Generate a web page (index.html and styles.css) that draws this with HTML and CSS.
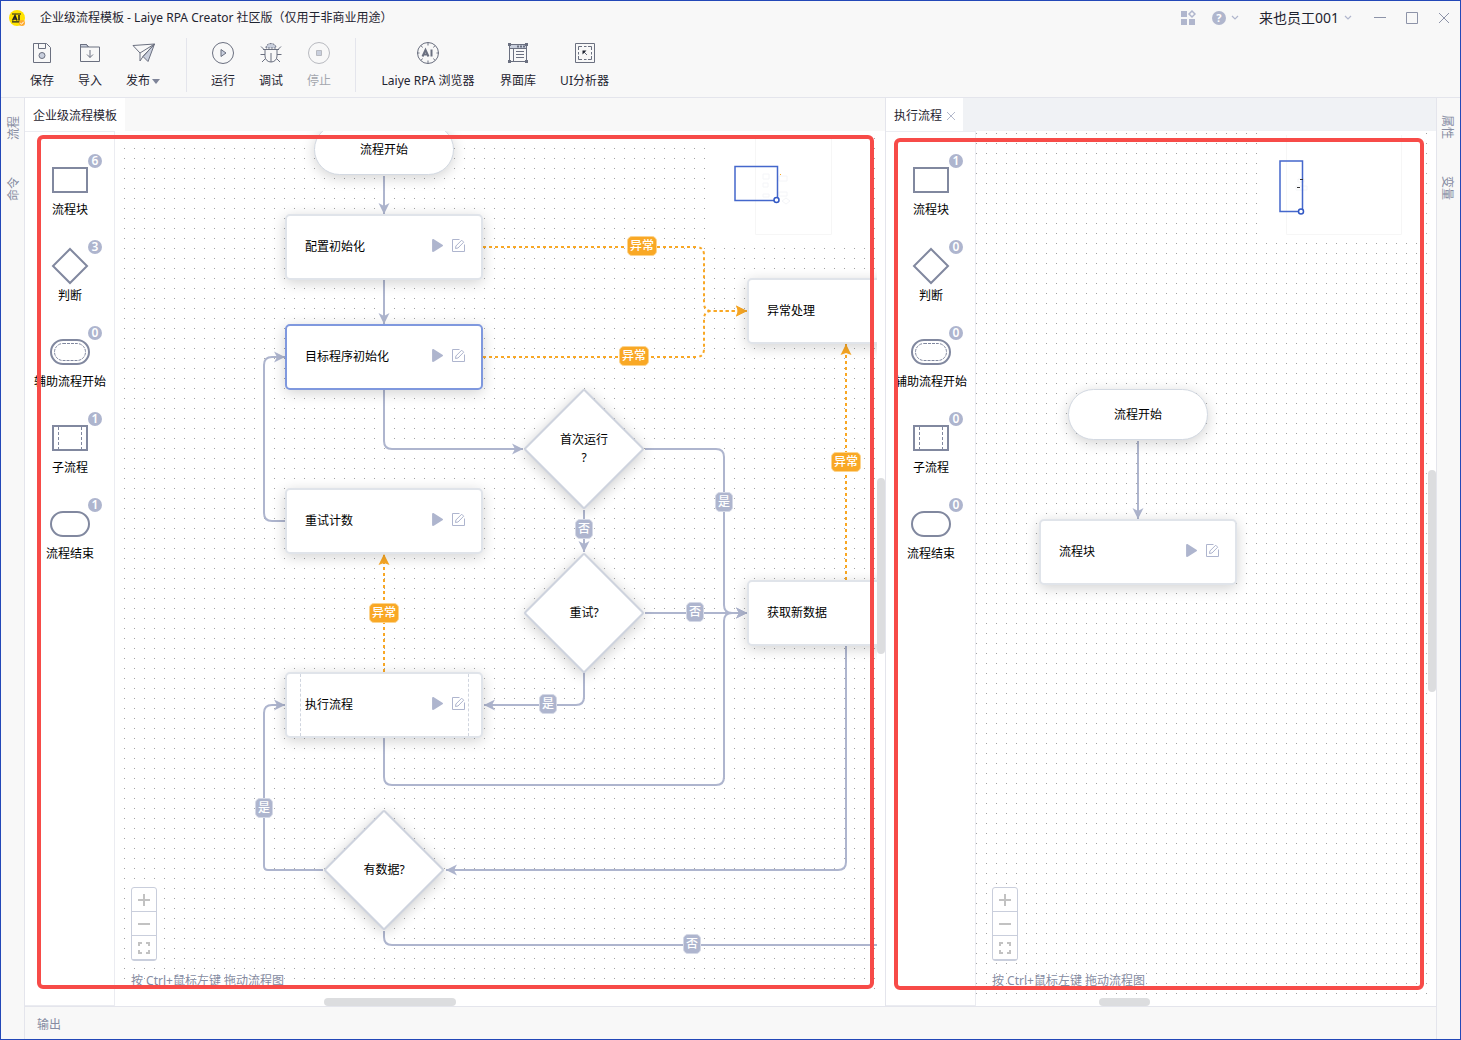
FILE: index.html
```html
<!DOCTYPE html>
<html lang="zh-CN">
<head>
<meta charset="utf-8">
<meta name="viewport" content="width=device-width, initial-scale=1">
<title>企业级流程模板 - Laiye RPA Creator</title>
<link rel="stylesheet" href="styles.css">
</head>
<body>
<svg class="defs" aria-hidden="true">
  <defs>
    <marker id="arrow" markerUnits="userSpaceOnUse" markerWidth="12" markerHeight="12" refX="11" refY="6" orient="auto"><path class="arrow-fill" d="M0 0.5 11 6 0 11.5 3 6z"/></marker>
    <marker id="arrow-error" markerUnits="userSpaceOnUse" markerWidth="12" markerHeight="12" refX="11" refY="6" orient="auto"><path class="arrow-fill-error" d="M0 0.5 11 6 0 11.5 2 6z"/></marker>
    <pattern id="dots-main" width="10" height="10" patternUnits="userSpaceOnUse"><rect class="dot" x="9" y="7" width="1" height="1"/></pattern>
    <pattern id="dots-sub" width="10" height="10" patternUnits="userSpaceOnUse"><rect class="dot" x="0" y="2" width="1" height="1"/></pattern>
    <symbol id="chevron" viewBox="0 0 8 6"><path d="M1 1l3 3 3-3" fill="none" stroke="currentColor" stroke-width="1.2"/></symbol>
    <symbol id="play" viewBox="0 0 12 12"><path d="M1 1.2C1 .3 1.8-.2 2.6.2L10.600 5.200c.7.400.7 1.200 0 1.600L2.600 11.800C1.800 12.200 1 11.700 1 10.800z" fill="currentColor"/></symbol>
    <symbol id="edit" viewBox="0 0 13 13"><path d="M7.500.500H.500v12h12V5.500" fill="none" stroke="currentColor"/><path d="M3.500 9.500l.4-2.500L9.700 1.200l2 2L6 9z" fill="none" stroke="currentColor"/></symbol>
    <symbol id="shape-block" viewBox="0 0 40 40"><path d="M3 8h34v24H3z"/></symbol>
    <symbol id="shape-decision" viewBox="0 0 40 40"><path d="M20 3l17 17-17 17L3 20z"/></symbol>
    <symbol id="shape-aux" viewBox="0 0 40 40"><rect x="1" y="8" width="38" height="24" rx="12"/><rect x="4.500" y="11.500" width="31" height="17" rx="8.500" stroke-width="1" stroke-dasharray="3 1"/></symbol>
    <symbol id="shape-sub" viewBox="0 0 40 40"><path d="M3 8h34v24H3z"/><path d="M8.500 9v22M31.500 9v22" stroke-width="1" stroke-dasharray="3 2"/></symbol>
    <symbol id="shape-end" viewBox="0 0 40 40"><rect x="1" y="8" width="38" height="24" rx="12"/></symbol>
  </defs>
</svg>

<header class="header">
  <div class="titlebar">
    <svg class="logo" viewBox="0 0 18 18"><circle cx="9" cy="9" r="8" fill="#ffe300"/><path d="M4 5h9M4 12.800h8" stroke="#222" stroke-width="1.200"/><path d="M4.500 11.500L7 6.500l2 5M5.500 10h3M11 6v5.500" fill="none" stroke="#222" stroke-width="1.500"/><circle cx="14" cy="14" r="3" fill="#ffab2e"/><path d="M12.300 14.200l1.300 1 2-2.400" fill="none" stroke="#fff"/></svg>
    <h1 class="title">企业级流程模板 - Laiye RPA Creator 社区版（仅用于非商业用途）</h1>
    <div class="account">
      <button class="icon-btn apps" aria-label="应用"><svg width="16" height="16" viewBox="0 0 16 16" fill="currentColor"><path d="M1 1h6v6H1zM1 9h6v6H1zM9 9h6v6H9z"/><path d="M12 1l3 3-3 3-3-3z" fill="none" stroke="currentColor" stroke-width="1.500"/></svg></button>
      <button class="icon-btn help" aria-label="帮助"><span class="help-mark">?</span><svg width="8" height="6"><use href="#chevron"/></svg></button>
      <button class="icon-btn user">来也员工001<svg width="8" height="6"><use href="#chevron"/></svg></button>
    </div>
    <div class="window-buttons">
      <button class="icon-btn" aria-label="最小化"><svg width="12" height="12"><path d="M0 5.500h12" stroke="currentColor"/></svg></button>
      <button class="icon-btn" aria-label="最大化"><svg width="12" height="12"><path d="M.5.500h11v11H.500z" fill="none" stroke="currentColor"/></svg></button>
      <button class="icon-btn" aria-label="关闭"><svg width="12" height="12"><path d="M1 1l10 10M11 1L1 11" stroke="currentColor"/></svg></button>
    </div>
  </div>
  <nav class="toolbar">
    <button class="tool"><svg viewBox="0 0 24 24"><path d="M3.500 2.500h13l4 4v15h-17zM8.500 2.500v5h7v-5"/><circle class="tint" cx="12" cy="14.500" r="3"/></svg><span>保存</span></button>
    <button class="tool"><svg viewBox="0 0 24 24"><path class="tint" d="M2.500 6V3.500h6l2 2.500z"/><path d="M2.500 3.500h6l2 2.500h11v14.500h-19zM12 9v7.500M9 13.500l3 3 3-3"/></svg><span>导入</span></button>
    <button class="tool"><svg viewBox="0 0 24 24"><path class="tint" d="M22.500 3L16 20.500l-5-5z"/><path d="M1 4.500L22.500 3 8 12zM8 12v8l3-4.500M11 15.500L22.500 3"/></svg><span class="with-caret">发布</span></button>
    <span class="separator"></span>
    <button class="tool"><svg viewBox="0 0 24 24"><circle cx="12" cy="12" r="10.500"/><path class="tint" d="M10 8.500v7l5-3.500z"/></svg><span>运行</span></button>
    <button class="tool"><svg viewBox="0 0 24 24"><path class="tint" d="M7 7c0-6 10-6 10 0z" stroke-dasharray="2 1"/><path d="M4 8.500h16M6 8.500V15c0 8 12 8 12 0V8.500M12 12v9M1.500 13.500H6M18 13.500h4.500M5 8.500l-3-3M19 8.500l3-3M6.500 17.500L3 21M17.500 17.500L21 21"/></svg><span>调试</span></button>
    <button class="tool" disabled><svg viewBox="0 0 24 24"><circle cx="12" cy="12" r="10.500"/><path class="tint" d="M9.500 9.500h5v5h-5z"/></svg><span>停止</span></button>
    <span class="separator"></span>
    <button class="tool tool-wide"><svg viewBox="0 0 24 24"><circle cx="12" cy="12" r="10.500"/><path d="M12 1.500v3M12 19.500v3M1.500 12h2M20.500 12h2M5 4.500l1.500 2M19 4.500l-1.500 2M5 19.500l1.500-2M19 19.500l-1.500-2"/><path d="M6.500 15.500L9.500 9l3 6.500M8 13.500h3.500M15.500 8.500v7" stroke-width="2"/></svg><span>Laiye RPA 浏览器</span></button>
    <button class="tool"><svg viewBox="0 0 24 24"><path class="tint" d="M3.500 3.500h17v4h-17z"/><path d="M3.500 3.500h17v17h-17zM7.500 7.500v13M10 10.500h8M10 13.500h8M10 16.500h8"/><path d="M2 3.500h3M19 3.500h3M2 20.500h3M19 20.500h3" stroke-width="3"/><path d="M11 5.500h8" stroke-width="2" stroke-dasharray="2 1"/></svg><span>界面库</span></button>
    <button class="tool"><svg viewBox="0 0 24 24"><path d="M2.500 2.500h19v19h-19z"/><path d="M5.500 9V5.500H9M15 5.500h3.500V9M18.500 15v3.500H15M9 18.500H5.500V15M11 5.500h2.500M11 18.500h2.500M5.500 11v2.500M18.500 11v2.500M10 10l4 4"/><path d="M9.500 9.500h4l-4 4z" fill="currentColor" stroke="none"/></svg><span>UI分析器</span></button>
  </nav>
</header>

<main class="workspace">
  <nav class="rail rail-left">
    <button class="rail-tab">流程</button>
    <button class="rail-tab">命令</button>
  </nav>

  <div class="center">
    <div class="panes">
      <section class="pane pane-main">
        <div class="tabs"><button class="tab">企业级流程模板</button></div>
        <div class="pane-body">
          <ul class="palette">
            <li class="shape"><div class="glyph"><svg><use href="#shape-block"/></svg><span class="badge">6</span></div>流程块</li>
            <li class="shape"><div class="glyph"><svg><use href="#shape-decision"/></svg><span class="badge">3</span></div>判断</li>
            <li class="shape"><div class="glyph"><svg><use href="#shape-aux"/></svg><span class="badge">0</span></div>辅助流程开始</li>
            <li class="shape"><div class="glyph"><svg><use href="#shape-sub"/></svg><span class="badge">1</span></div>子流程</li>
            <li class="shape"><div class="glyph"><svg><use href="#shape-end"/></svg><span class="badge">1</span></div>流程结束</li>
          </ul>
          <div class="canvas">
            <div class="stage">
              <svg class="layer">
                <rect width="100%" height="100%" fill="url(#dots-main)"/>
              </svg>
              <svg class="minimap" viewBox="0 0 162 111">
                <path class="mini-page" d="M45.500 4v99.500h76V4"/>
                <path class="mini-shapes" d="M53 43h6v5h-6zM53 52h5v4h-5zM53 63h6v3h-6zM69 45h8v5h-8zM69 61h8v4h-8zM76 67l4 3-4 3-4-3z"/>
                <path class="mini-view" d="M25 35.500h42.500v34H25z"/>
                <circle class="mini-handle" cx="66.500" cy="69" r="2.500"/>
                <path d="M70 43h1v1h-1z" fill="#f9a825"/>
              </svg>
              <svg class="layer">
                <g class="edges" transform="translate(-115 -131)">
                  <path d="M384 176V214"/>
                  <path d="M384 280V324"/>
                  <path d="M384 390V441Q384 449 392 449H523"/>
                  <path d="M645 449H716Q724 449 724 457V605Q724 613 732 613H747"/>
                  <path d="M645 613H747"/>
                  <path d="M384 738V777Q384 785 392 785H716Q724 785 724 777V621Q724 613 732 613H747"/>
                  <path d="M584 510V552"/>
                  <path d="M584 673V697Q584 705 576 705H484"/>
                  <path d="M285 521H272Q264 521 264 513V365Q264 357 272 357H285"/>
                  <path d="M323 870H268Q264 870 264 866V713Q264 705 272 705H285"/>
                  <path d="M846 646V862Q846 870 838 870H446"/>
                  <path class="no-arrow" d="M384 931V937Q384 945 392 945H1000"/>
                </g>
                <g class="edges edges-error" transform="translate(-115 -131)">
                  <path d="M483 247H696Q704 247 704 255V303Q704 311 712 311H747"/>
                  <path d="M483 357H696Q704 357 704 349V319Q704 311 712 311H747"/>
                  <path d="M384 672V554"/>
                  <path d="M846 580V344"/>
                </g>
              </svg>
              <div class="node terminal at-start">流程开始</div>
              <div class="node block at-config">配置初始化<span class="actions"><button aria-label="运行"><svg><use href="#play"/></svg></button><button aria-label="编辑"><svg><use href="#edit"/></svg></button></span></div>
              <div class="node block selected at-target">目标程序初始化<span class="actions"><button aria-label="运行"><svg><use href="#play"/></svg></button><button aria-label="编辑"><svg><use href="#edit"/></svg></button></span></div>
              <div class="node block at-count">重试计数<span class="actions"><button aria-label="运行"><svg><use href="#play"/></svg></button><button aria-label="编辑"><svg><use href="#edit"/></svg></button></span></div>
              <div class="node block subprocess at-run">执行流程<span class="actions"><button aria-label="运行"><svg><use href="#play"/></svg></button><button aria-label="编辑"><svg><use href="#edit"/></svg></button></span></div>
              <div class="node block at-error">异常处理</div>
              <div class="node block at-fetch">获取新数据</div>
              <div class="node decision at-first"><span>首次运行<br>?</span></div>
              <div class="node decision at-retry"><span>重试?</span></div>
              <div class="node decision at-data"><span>有数据?</span></div>
              <span class="tag error tag-config">异常</span>
              <span class="tag error tag-target">异常</span>
              <span class="tag error tag-fetch">异常</span>
              <span class="tag error tag-run">异常</span>
              <span class="tag tag-first-yes">是</span>
              <span class="tag tag-first-no">否</span>
              <span class="tag tag-retry-no">否</span>
              <span class="tag tag-retry-yes">是</span>
              <span class="tag tag-data-yes">是</span>
              <span class="tag tag-data-no">否</span>
            </div>
            <div class="canvas-tools">
              <div class="zoom">
                <button aria-label="放大"><svg viewBox="0 0 12 12"><path d="M0 6h12M6 0v12"/></svg></button>
                <button aria-label="缩小"><svg viewBox="0 0 12 12"><path d="M0 6h12"/></svg></button>
                <button aria-label="适应"><svg viewBox="0 0 12 12"><path d="M1 4V1h3M8 1h3v3M11 8v3H8M4 11H1V8"/></svg></button>
              </div>
              <p class="hint">按 Ctrl+鼠标左键 拖动流程图</p>
            </div>
            <span class="thumb thumb-y"></span>
            <span class="thumb thumb-x"></span>
          </div>
          <div class="frame"></div>
        </div>
      </section>

      <section class="pane pane-sub">
        <div class="tabs"><button class="tab">执行流程<svg width="8" height="8" viewBox="0 0 8 8"><path d="M0 0l8 8M8 0L0 8" stroke="#b4b9cc"/></svg></button></div>
        <div class="pane-body">
          <ul class="palette">
            <li class="shape"><div class="glyph"><svg><use href="#shape-block"/></svg><span class="badge">1</span></div>流程块</li>
            <li class="shape"><div class="glyph"><svg><use href="#shape-decision"/></svg><span class="badge">0</span></div>判断</li>
            <li class="shape"><div class="glyph"><svg><use href="#shape-aux"/></svg><span class="badge">0</span></div>辅助流程开始</li>
            <li class="shape"><div class="glyph"><svg><use href="#shape-sub"/></svg><span class="badge">0</span></div>子流程</li>
            <li class="shape"><div class="glyph"><svg><use href="#shape-end"/></svg><span class="badge">0</span></div>流程结束</li>
          </ul>
          <div class="canvas">
            <div class="stage">
              <svg class="layer">
                <rect width="100%" height="100%" fill="url(#dots-sub)"/>
              </svg>
              <svg class="minimap" viewBox="0 0 162 111">
                <path class="mini-page" d="M25.500 4v99.500h115V4"/>
                <path class="mini-shapes" d="M37 48h6v3h-6zM35 55h11v4H35z"/>
                <path class="mini-view" d="M19 30h22.500v50.500H19z"/>
                <circle class="mini-handle" cx="40" cy="80.500" r="2.500"/>
                <path d="M36 56h3v1h-3zM39 48h3v1h-3z" fill="#333"/>
              </svg>
              <svg class="layer">
                <g class="edges" transform="translate(-976 -131)"><path d="M1138 441V519"/></g>
              </svg>
              <div class="node terminal at-sub-start">流程开始</div>
              <div class="node block at-sub-block">流程块<span class="actions"><button aria-label="运行"><svg><use href="#play"/></svg></button><button aria-label="编辑"><svg><use href="#edit"/></svg></button></span></div>
            </div>
            <div class="canvas-tools">
              <div class="zoom">
                <button aria-label="放大"><svg viewBox="0 0 12 12"><path d="M0 6h12M6 0v12"/></svg></button>
                <button aria-label="缩小"><svg viewBox="0 0 12 12"><path d="M0 6h12"/></svg></button>
                <button aria-label="适应"><svg viewBox="0 0 12 12"><path d="M1 4V1h3M8 1h3v3M11 8v3H8M4 11H1V8"/></svg></button>
              </div>
              <p class="hint">按 Ctrl+鼠标左键 拖动流程图</p>
            </div>
            <span class="thumb thumb-y"></span>
            <span class="thumb thumb-x"></span>
          </div>
          <div class="frame"></div>
        </div>
      </section>
    </div>
    <footer class="output"><button class="output-tab">输出</button></footer>
  </div>

  <nav class="rail rail-right">
    <button class="rail-tab">属性</button>
    <button class="rail-tab">变量</button>
  </nav>
</main>
</body>
</html>
```
FILE: styles.css
```css
:root {
  --bar: #f8f8f8;
  --line: #e4e5ec;
  --edge: #aeb5ce;
  --error: #f9a825;
  --muted: #868ca2;
}

* { box-sizing: border-box; }

body {
  margin: 0;
  min-height: 100vh;
  display: flex;
  flex-direction: column;
  border: 1px solid #2348b8;
  background: var(--bar);
  color: #1f2430;
  font: 12px/18px "Noto Sans", "Noto Sans CJK SC", sans-serif;
}

button {
  margin: 0;
  padding: 0;
  border: 0;
  background: none;
  color: inherit;
  font: inherit;
}

.defs { position: absolute; width: 0; height: 0; }
.arrow-fill { fill: var(--edge); }
.arrow-fill-error { fill: var(--error); }
.dot { fill: #a2a2a2; }

/* Header */
.header { border-bottom: 1px solid var(--line); }
.titlebar {
  display: flex;
  align-items: center;
  height: 33px;
  padding: 0 10px 0 7px;
}
.logo { width: 18px; height: 18px; }
.title { margin: 0 auto 0 14px; font-size: 12px; font-weight: 400; }
.account, .window-buttons, .icon-btn { display: flex; align-items: center; }
.icon-btn { color: #b0b6cd; }
.apps { margin-right: 16px; }
.help { gap: 5px; margin-right: 20px; }
.help-mark {
  width: 14px;
  height: 14px;
  border-radius: 50%;
  background: #b0b6cd;
  color: #fff;
  font-size: 11px;
  font-weight: 700;
  line-height: 14px;
}
.user { gap: 5px; color: #1f2430; font-size: 14px; }
.user svg { color: #b0b6cd; }
.window-buttons { gap: 20px; margin-left: 22px; }
.window-buttons .icon-btn { color: #8d93a8; }

.toolbar {
  display: flex;
  gap: 24px;
  height: 63px;
  padding: 4px 29px 5px;
}
.tool {
  display: flex;
  flex-direction: column;
  align-items: center;
  gap: 7px;
  padding-top: 3px;
}
.tool-wide { min-width: 96px; }
.tool svg {
  width: 24px;
  height: 24px;
  fill: none;
  stroke: #6b7080;
}
.tool .tint { fill: #c9cfdd; }
.tool:disabled { color: #a3a6ad; }
.tool:disabled svg { stroke: #b8bac0; }
.with-caret { display: flex; align-items: center; gap: 2px; padding-right: 2px; }
.with-caret::after {
  content: "";
  border: 4px solid transparent;
  border-top: 5px solid #7e8499;
  border-bottom: 0;
}
.separator { width: 1px; background: var(--line); }

/* Workspace */
.workspace { flex: 1; display: flex; }
.center { flex: 1; min-width: 0; display: flex; flex-direction: column; }
.rail {
  width: 24px;
  padding-top: 17px;
  display: flex;
  flex-direction: column;
  align-items: center;
  gap: 36px;
}
.rail-left { padding-left: 3px; border-right: 1px solid var(--line); }
.rail-right { padding-right: 4px; border-left: 1px solid var(--line); }
.rail-tab {
  height: 25px;
  writing-mode: vertical-rl;
  text-orientation: sideways;
  color: var(--muted);
}
.rail-left .rail-tab { transform: rotate(180deg); }
.output {
  height: 33px;
  display: flex;
  align-items: center;
  padding: 4px 12px 0;
  border-top: 1px solid var(--line);
  color: var(--muted);
}

.panes { flex: 1; display: grid; grid-template-columns: 860fr 551fr; }
.pane { min-width: 0; display: flex; flex-direction: column; }
.pane-sub { border-left: 1px solid var(--line); }
.tabs { height: 33px; display: flex; }
.pane-sub .tabs { background: #f0f2f5; }
.tab {
  display: flex;
  align-items: center;
  gap: 5px;
  padding: 2px 8px 0;
  background: #fff;
}
.pane-body { position: relative; flex: 1; display: flex; background: #fff; }

/* Shape palette */
.palette {
  width: 90px;
  margin: 0;
  padding: 28px 0 0 1px;
  border: 1px solid #ebecf1;
  border-left: 0;
  list-style: none;
  display: flex;
  flex-direction: column;
  align-items: center;
  gap: 27px;
  color: #000;
}
.shape {
  display: flex;
  flex-direction: column;
  align-items: center;
  gap: 1px;
  white-space: nowrap;
}
.glyph { position: relative; height: 40px; }
.glyph svg {
  display: block;
  width: 40px;
  height: 40px;
  fill: none;
  stroke: #81889f;
  stroke-width: 2;
}
.badge {
  position: absolute;
  left: 38px;
  top: -6px;
  width: 14px;
  height: 14px;
  border-radius: 50%;
  background: var(--edge);
  color: #fff;
  font-weight: 600;
  line-height: 14px;
  text-align: center;
}

/* Flow canvas */
.canvas { position: relative; flex: 1; min-width: 0; }
.stage {
  position: absolute;
  inset: 0 8px 12px 0;
  overflow: hidden;
}
.layer { position: absolute; width: 100%; height: 100%; }
.edges path {
  fill: none;
  stroke: var(--edge);
  stroke-width: 2;
  marker-end: url(#arrow);
}
.edges .no-arrow { marker-end: none; }
.edges-error path {
  stroke: var(--error);
  stroke-dasharray: 3 3;
  marker-end: url(#arrow-error);
}

.node {
  position: absolute;
  display: flex;
  align-items: center;
  justify-content: center;
  color: #000;
}
.terminal, .block {
  border: 2px solid #e0e4ea;
  background: #fff;
  box-shadow: 0 3px 14px rgba(0, 0, 0, 0.18);
}
.terminal { width: 140px; height: 51px; border: 1px solid #d3d9e2; border-radius: 26px; }
.block {
  width: 198px;
  height: 66px;
  padding: 0 16px 0 18px;
  border-radius: 5px;
  justify-content: space-between;
}
.selected { border-color: #7f98de; }
.subprocess::before, .subprocess::after {
  content: "";
  position: absolute;
  inset: 0 auto 0 13px;
  border-left: 1px dashed #d0d5df;
}
.subprocess::after { inset: 0 12px 0 auto; }
.actions { display: flex; gap: 8px; padding-bottom: 4px; color: var(--edge); }
.actions svg { display: block; width: 13px; height: 13px; }
.decision { width: 120px; height: 120px; text-align: center; }
.decision::before {
  content: "";
  position: absolute;
  inset: 17px;
  border: 2px solid #ced3de;
  border-radius: 2px;
  background: #fff;
  box-shadow: 2px 2px 14px rgba(0, 0, 0, 0.2);
  transform: rotate(45deg);
}
.decision span { position: relative; }

.at-start { left: 199px; top: -7px; }
.at-config { left: 170px; top: 83px; }
.at-target { left: 170px; top: 193px; }
.at-count { left: 170px; top: 357px; }
.at-run { left: 170px; top: 541px; }
.at-error { left: 632px; top: 147px; }
.at-fetch { left: 632px; top: 449px; }
.at-first { left: 409px; top: 258px; }
.at-retry { left: 409px; top: 422px; }
.at-data { left: 209px; top: 679px; }
.at-sub-start { left: 92px; top: 258px; }
.at-sub-block { left: 63px; top: 388px; }

.tag {
  position: absolute;
  width: 18px;
  height: 20px;
  border: 1px solid #d5d9e6;
  border-radius: 5px;
  background: var(--edge);
  color: #fff;
  font-weight: 500;
  text-align: center;
}
.tag.error { width: 30px; border-color: #fcd48f; background: var(--error); }
.tag-config { left: 512px; top: 105px; }
.tag-target { left: 504px; top: 215px; }
.tag-fetch { left: 716px; top: 321px; }
.tag-run { left: 254px; top: 472px; }
.tag-first-yes { left: 600px; top: 361px; }
.tag-first-no { left: 460px; top: 388px; }
.tag-retry-no { left: 571px; top: 471px; }
.tag-retry-yes { left: 424px; top: 563px; }
.tag-data-yes { left: 140px; top: 667px; }
.tag-data-no { left: 568px; top: 803px; }

.minimap {
  position: absolute;
  top: 0;
  right: 5px;
  width: 162px;
  height: 111px;
  background: #fff;
}
.mini-page { fill: none; stroke: #f6f6f6; }
.mini-shapes { fill: none; stroke: #f4f5f8; }
.mini-view { fill: none; stroke: #4467cc; stroke-width: 1.5; }
.mini-handle { fill: #fff; stroke: #3258c4; stroke-width: 1.5; }

.canvas-tools {
  position: absolute;
  left: 16px;
  bottom: 16px;
  display: flex;
  flex-direction: column;
  align-items: flex-start;
  gap: 11px;
}
.zoom {
  width: 26px;
  display: flex;
  flex-direction: column;
  border: 1px solid #c9cedc;
  border-radius: 3px;
  background: #fff;
}
.zoom button {
  height: 24px;
  display: grid;
  place-items: center;
  border-bottom: 1px solid #c9cedc;
}
.zoom svg {
  width: 12px;
  height: 12px;
  fill: none;
  stroke: #c2c2c2;
  stroke-width: 2;
}
.hint { margin: 0; color: var(--muted); white-space: nowrap; }

.thumb { position: absolute; border-radius: 4px; background: #dcdddf; }
.thumb-y { right: 0; top: 347px; width: 8px; height: 176px; }
.thumb-x { bottom: 0; left: 209px; width: 132px; height: 8px; }
.pane-sub .thumb-y { top: 339px; height: 222px; }
.pane-sub .thumb-x { left: 123px; width: 51px; }

/* Highlight frames over each editor */
.frame {
  position: absolute;
  inset: 4px 11px 17px 12px;
  border: 4px solid #f74b48;
  border-radius: 6px;
  pointer-events: none;
}
.pane-sub .frame { inset: 7px 12px 16px 8px; }
```
